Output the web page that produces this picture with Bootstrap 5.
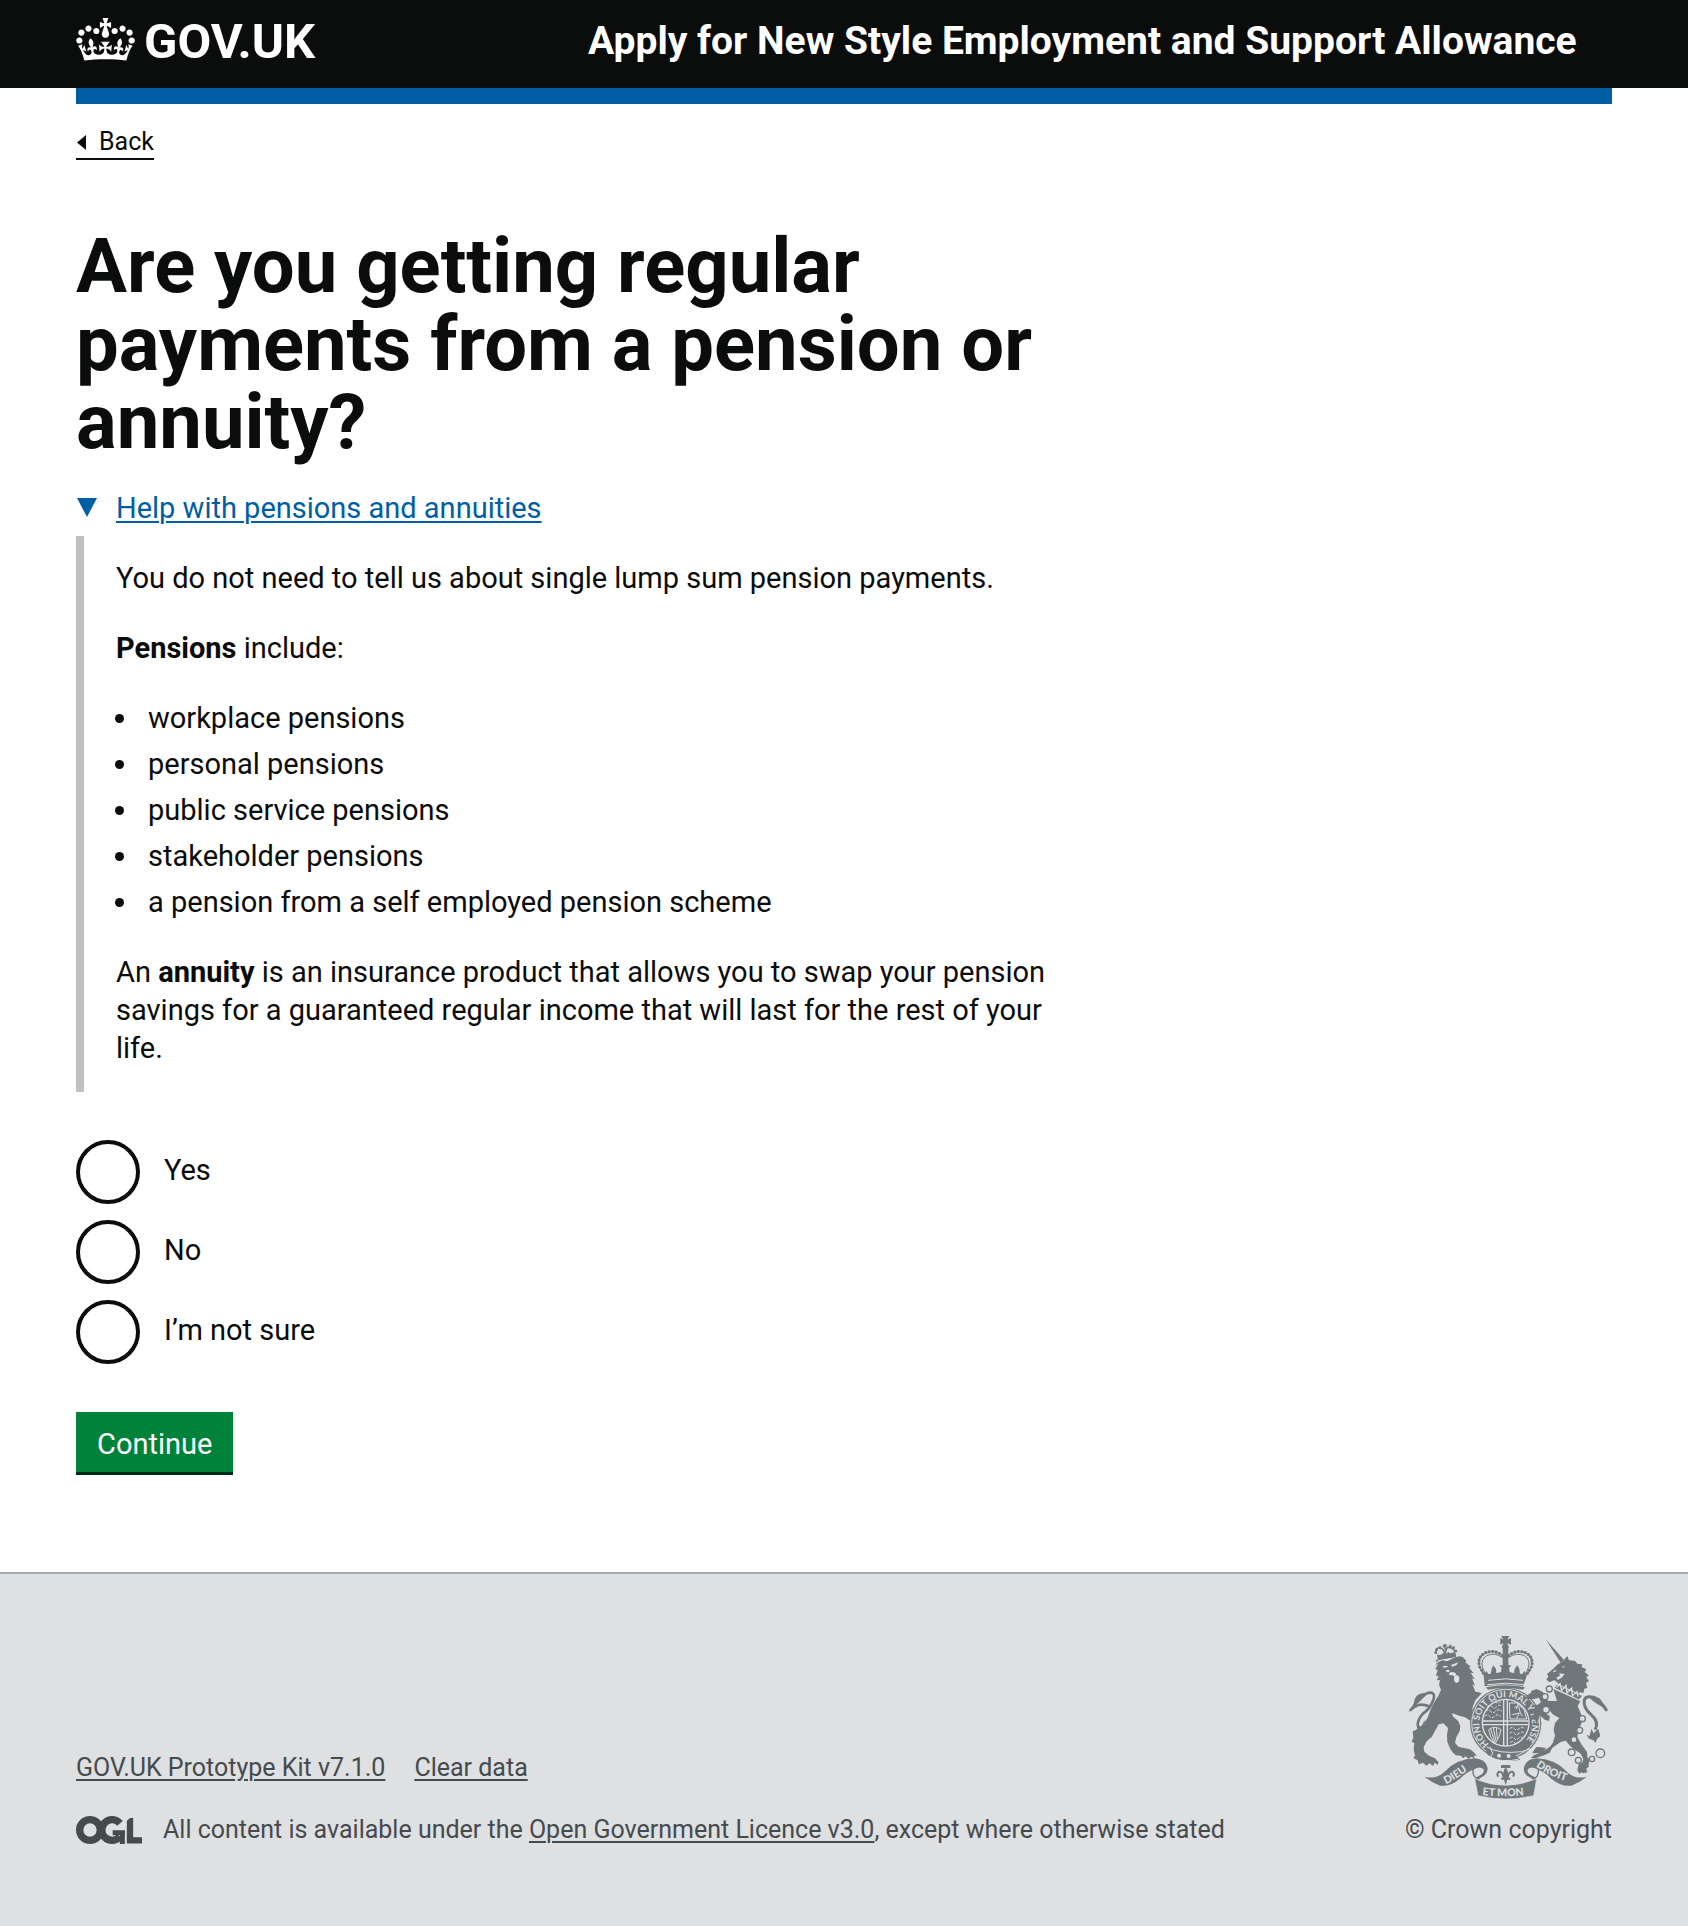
<!DOCTYPE html>
<html lang="en">
<head>
<meta charset="utf-8">
<meta name="viewport" content="width=device-width, initial-scale=1">
<title>Are you getting regular payments from a pension or annuity?</title>
<link rel="stylesheet" href="https://cdn.jsdelivr.net/npm/bootstrap@5.3.0/dist/css/bootstrap.min.css">
<script src="https://cdn.jsdelivr.net/npm/bootstrap@5.3.0/dist/js/bootstrap.bundle.min.js"></script>
<style>
  body { font-family: Roboto, "Liberation Sans", Arial, sans-serif; font-size: 29px; line-height: 38px; color: #0b0c0c; background: #fff; }
  .page-width { width: 91%; max-width: 1536px; margin: 0 auto; }
  .site-header { background: #0b0c0c; color: #fff; padding: 18px 0 22px; }
  .site-header a { color: #fff; text-decoration: none; font-weight: 700; }
  .logotype { font-size: 49px; line-height: 48px; gap: 9px; }
  .service-name { font-size: 39px; line-height: 46px; display: block; }
  .blue-bar { height: 16px; background: #005ea5; }
  .back-link { font-size: 25px; line-height: 32px; color: #0b0c0c; text-decoration: none; border-bottom: 2px solid #0b0c0c; margin-top: 22px; gap: 13px; }
  .two-thirds { max-width: 1008px; }
  h1 { font-size: 76px; line-height: 78px; font-weight: 700; margin: 67px 0 28px; }
  summary { list-style: none; color: #005ea5; gap: 19px; }
  summary::-webkit-details-marker { display: none; }
  summary span, .site-footer a { text-decoration: underline; text-decoration-thickness: 2px; text-underline-offset: 3px; }
  .help-text { border-left: 8px solid #bfc1c3; margin-top: 9px; padding: 23px 24px 25px 32px; }
  .help-text p, .help-text ul { margin-bottom: 32px; }
  .help-text p:last-child { margin-bottom: 0; }
  .help-text ul { padding-left: 24px; }
  .help-text li { padding-left: 8px; }
  .help-text li + li { margin-top: 8px; }
  .choices { margin: 48px 0; gap: 16px; }
  .choices input { appearance: none; width: 64px; height: 64px; border: 4px solid #0b0c0c; border-radius: 50%; margin: 0; background: #fff; }
  .choices input:checked { box-shadow: inset 0 0 0 12px #fff; background: #0b0c0c; }
  .choices label { padding: 11px 24px; }
  .btn-continue { font-size: 29px; line-height: 38px; padding: 13px 21px 9px; border: 0; border-radius: 0; color: #fff; background: #00823b; box-shadow: 0 3px 0 #002d18; }
  .btn-continue:hover { background: #00692f; color: #fff; }
  .site-footer { margin-top: 100px; border-top: 2px solid #a1acb2; background: #dee0e2; color: #454a4d; font-size: 25px; line-height: 32px; padding: 62px 0 80px; }
  .site-footer a { color: #454a4d; }
  .meta-links { gap: 29px; margin-bottom: 30px; }
  .licence { gap: 21px; }
  .arms { display: block; margin: 0 4px 15px auto; }
</style>
</head>
<body>
<header>
  <div class="site-header">
    <div class="page-width">
      <div class="row g-0">
        <div class="col-4 d-flex">
          <a href="#" class="logotype d-flex align-items-start">
            <svg width="59" height="43" viewBox="0 0 132 97" fill="#fff" aria-hidden="true"><path d="M25 30.2c3.5 1.5 7.7-.2 9.1-3.7 1.5-3.6-.2-7.8-3.9-9.2-3.6-1.4-7.6.3-9.1 3.9-1.4 3.5.3 7.5 3.9 9zM9 39.5c3.6 1.5 7.8-.2 9.2-3.7 1.5-3.6-.2-7.8-3.9-9.1-3.6-1.5-7.6.2-9.1 3.8-1.4 3.5.3 7.5 3.8 9zM4.4 57.2c3.5 1.5 7.7-.2 9.1-3.8 1.5-3.6-.2-7.7-3.9-9.1-3.5-1.5-7.6.3-9.1 3.8-1.4 3.5.3 7.6 3.9 9.1zm38.3-21.4c3.5 1.5 7.7-.2 9.1-3.8 1.5-3.6-.2-7.7-3.9-9.1-3.6-1.5-7.6.3-9.1 3.8-1.3 3.6.4 7.7 3.9 9.1zm64.4-5.6c-3.6 1.5-7.8-.2-9.1-3.7-1.5-3.6.2-7.8 3.8-9.2 3.6-1.4 7.7.3 9.2 3.9 1.3 3.5-.4 7.5-3.9 9zm15.9 9.3c-3.6 1.5-7.7-.2-9.1-3.7-1.5-3.6.2-7.8 3.7-9.1 3.6-1.5 7.7.2 9.2 3.8 1.5 3.5-.3 7.5-3.8 9zm4.7 17.7c-3.6 1.5-7.8-.2-9.2-3.8-1.5-3.6.2-7.7 3.9-9.1 3.6-1.5 7.7.3 9.2 3.8 1.3 3.5-.4 7.6-3.9 9.1zM89.3 35.8c-3.6 1.5-7.8-.2-9.2-3.8-1.4-3.6.2-7.7 3.9-9.1 3.6-1.5 7.7.3 9.2 3.8 1.4 3.6-.3 7.7-3.9 9.1zM69.7 17.7l8.9 4.7V9.3l-8.9 2.8c-.2-.3-.5-.6-.9-.9L72.4 0H59.6l3.5 11.2c-.3.3-.6.5-.9.9l-8.8-2.8v13.1l8.8-4.7c.3.3.6.7.9.9l-5 15.4v.1c-.2.8-.4 1.6-.4 2.4 0 4.1 3.1 7.5 7 8.1h.2c.3 0 .7.1 1 .1.4 0 .7 0 1-.1h.2c4-.6 7.1-4.1 7.1-8.1 0-.8-.1-1.7-.4-2.4V34l-5.1-15.4c.4-.2.7-.6 1-.9zM66 92.8c16.9 0 32.8 1.1 47.1 3.2 4-16.9 8.9-26.7 14-33.5l-9.6-3.4c1 4.9 1.1 7.2 0 10.2-1.5-1.4-3-4.3-4.2-8.7L108.6 76c2.8-2 5-3.2 7.5-3.3-4.4 9.4-10 11.9-13.6 11.2-4.3-.8-6.3-4.6-5.6-7.9 1-4.7 5.7-5.9 8-.5 4.3-8.7-3-11.4-7.6-8.8 7.1-7.2 7.9-13.5 2.1-21.1-8 6.1-8.1 12.3-4.5 20.8-4.7-5.4-12.1-2.5-9.5 6.2 3.4-5.2 7.9-2 7.2 3.1-.6 4.3-6.4 7.8-13.5 7.2-10.3-.9-10.9-8-11.2-13.8 2.5-.5 7.1 1.8 11 7.3L80.2 60c-4.1 4.4-8 5.3-12.3 5.4 1.4-4.4 8-11.6 8-11.6H55.5s6.4 7.2 7.9 11.6c-4.2-.1-8-1-12.3-5.4l1.4 16.4c3.9-5.5 8.5-7.7 10.9-7.3-.3 5.8-.9 12.8-11.1 13.8-7.2.6-12.9-2.9-13.5-7.2-.7-5 3.8-8.3 7.1-3.1 2.7-8.7-4.6-11.6-9.4-6.2 3.7-8.5 3.6-14.7-4.6-20.8-5.8 7.6-5 13.9 2.2 21.1-4.7-2.6-11.9.1-7.7 8.8 2.3-5.5 7.1-4.2 8.1.5.7 3.3-1.3 7.1-5.7 7.9-3.5.7-9-1.8-13.5-11.2 2.5.1 4.7 1.3 7.5 3.3l-4.7-15.4c-1.2 4.4-2.7 7.2-4.3 8.7-1.1-3-.9-5.3 0-10.2l-9.5 3.4c5 6.9 9.9 16.7 14 33.5 14.8-2.1 30.8-3.2 47.7-3.2z"/></svg>
            <span>GOV.UK</span>
          </a>
        </div>
        <div class="col-8">
          <a href="#" class="service-name">Apply for New Style Employment and Support Allowance</a>
        </div>
      </div>
    </div>
  </div>
  <div class="page-width"><div class="blue-bar"></div></div>
</header>

<div class="page-width">
  <a href="#" class="back-link d-inline-flex align-items-center"><svg width="10" height="15" viewBox="0 0 10 15" aria-hidden="true"><path d="M10 0v15L1 7.500z" fill="#0b0c0c"/></svg>Back</a>
  <main class="two-thirds">
    <h1>Are you getting regular payments from a pension or annuity?</h1>
    <details open>
      <summary class="d-flex align-items-center"><svg width="21" height="20" viewBox="0 0 21 20" aria-hidden="true"><path d="M1 0h20L11 19z" fill="#005ea5"/></svg><span>Help with pensions and annuities</span></summary>
      <div class="help-text">
        <p>You do not need to tell us about single lump sum pension payments.</p>
        <p><strong>Pensions</strong> include:</p>
        <ul>
          <li>workplace pensions</li>
          <li>personal pensions</li>
          <li>public service pensions</li>
          <li>stakeholder pensions</li>
          <li>a pension from a self employed pension scheme</li>
        </ul>
        <p>An <strong>annuity</strong> is an insurance product that allows you to swap your pension savings for a guaranteed regular income that will last for the rest of your life.</p>
      </div>
    </details>
    <form>
      <div class="choices d-flex flex-column">
        <div class="d-flex align-items-start"><input type="radio" name="pension" id="pension-yes"><label for="pension-yes">Yes</label></div>
        <div class="d-flex align-items-start"><input type="radio" name="pension" id="pension-no"><label for="pension-no">No</label></div>
        <div class="d-flex align-items-start"><input type="radio" name="pension" id="pension-unsure"><label for="pension-unsure">I’m not sure</label></div>
      </div>
      <button type="button" class="btn btn-continue d-block">Continue</button>
    </form>
  </main>
</div>

<footer class="site-footer">
  <div class="page-width d-flex justify-content-between align-items-end">
    <div>
      <div class="meta-links d-flex"><a href="#">GOV.UK Prototype Kit v7.1.0</a><a href="#">Clear data</a></div>
      <div class="licence d-flex align-items-center">
        <svg width="66" height="28" viewBox="18 30 198 84" role="img" aria-label="OGL" fill="none" stroke="#454a4d">
          <circle cx="60" cy="72" r="31" stroke-width="22"/>
          <path d="M150 52A31 31 0 1 0 150 92" stroke-width="22"/>
          <path d="M128 80H165M157 76V114" stroke-width="15"/>
          <path d="M180 36V103H216" stroke-width="19"/>
          <path d="M166 48L190 28H166z" fill="#dee0e2" stroke="none"/>
        </svg>
        <span>All content is available under the <a href="#">Open Government Licence v3.0</a>, except where otherwise stated</span>
      </div>
    </div>
    <div class="text-end">
      <svg class="arms" width="200" height="163" viewBox="54 48 600 489" role="img" aria-label="Royal coat of arms" fill="#6f777b" font-family="Lato, Roboto, sans-serif" font-weight="700">
        <!-- lion: crown -->
        <g fill="none" stroke="#6f777b" stroke-width="5">
          <path d="M139 101q-4-19 12-17 10 3 15 18 1-17 8-20 15-1 22 14"/>
          <path d="M143 117l55-9M142 108l54-9M163 72l4 18M158 79l13-3"/>
        </g>
        <g><circle cx="137" cy="98" r="4"/><circle cx="140" cy="89" r="4"/><circle cx="150" cy="83" r="4"/><circle cx="181" cy="78" r="4"/><circle cx="191" cy="83" r="4"/><circle cx="198" cy="93" r="4"/><path d="M142 103l12 5 6-11 6 9 9-11 6 9 14-9 4 15-55 11z"/></g>
        <!-- lion: body -->
        <path d="M134 140l11-14 12-5 15 3 20-11 15-4 10 1 12 12-3 5 17 14-7 1 15 18-9-2 12 20-8-3 9 22-8-4 9 22 10 2 9 3-19 21-8 20-1 25 4 21-12-6-14-9-17-5-23-8 5 11 15 14 6 14-2 16-10 18-4 16 10 12 16 4 19 4 13 10 7 10-8-1 2 9-10-6-9 7-7-8-9 6-6-8-15-1-9-8-8-11-9-21-1-20 3-22-14-14-14 3-9 16-12 22-15 13-9 18 2 13 14 12 18 8 10 11-1 9-10-7-5 10-10-8-10 7-10-9-13 5-3-12-13-7 5-7-4-19 2-18-8-5 5-12-2-19 8-3 22-17 14-19 10-27 11-21 13-21 7-17-6-15 3-14-10 1 6-11-8-4 5-15-7-4 7-13-6-14 8-1z"/>
        <g fill="#dee0e2"><path d="M158 137l16 1-3 4-10 1zM183 135l22-8-6 9-13 4zM177 160q12-9 22 2l-4 9-7-5-10-1z"/><ellipse cx="200" cy="177" rx="8" ry="11"/><path d="M167 151l10-2 1 7-7 1z"/></g>
        <!-- lion: tail -->
        <path d="M54 278l17-27q3-31 32-32l9 1-3 5q-12 12-35 34z"/>
        <path d="M60 272q24-29 59-12M107 221q32-11 23 19-8 24-34 44-21 25-7 46" fill="none" stroke="#6f777b" stroke-width="8"/>
        <path d="M80 316l15 5 8-21 3 25 16-6-10 16-6 6 10 5-17 9-14-5 7-5-14-10 10-3z"/>
        <!-- central crown -->
        <path d="M334 48h24l-6 11 11-5v20l-11-5 5 14h-22l5-14-9 5V54l9 5z"/>
        <path d="M338 81h17v58h-17z"/>
        <g fill="none" stroke="#6f777b" stroke-width="9" stroke-dasharray="1 9.500" stroke-linecap="round"><path d="M337 107q-24-20-52-8-25 14-16 42l13 22M356 107q24-20 52-8 25 14 16 42l-13 22"/></g>
        <g fill="none" stroke="#6f777b" stroke-width="3"><path d="M338 113q-24-17-48-6-20 13-12 36l10 24M355 113q24-17 48-6 20 13 12 36l-10 24"/></g>
        <path d="M281 165l8-12 6 9 7-1 3-15 5-10 8 10 1 14 14-4 2-13-7-7h36l-7 8 2 12 13 4 2-14 8-10 6 10 2 15 7 1 6-9 8 12-12 34q-54-11-115 0z"/>
        <path d="M294 181q54-9 105 0M292 194q54-9 109 0" fill="none" stroke="#dee0e2" stroke-width="3"/>
        <path d="M288 202q58-13 117 0l-6 7q-54-10-105 0z"/>
        <!-- garter and shield -->
        <circle cx="347" cy="310" r="107"/>
        <g fill="none" stroke="#dee0e2" stroke-width="3"><circle cx="347" cy="310" r="102"/><circle cx="347" cy="308" r="70" stroke-width="4"/></g>
        <path id="garter-motto" d="M297 372A79 79 0 1 1 397 372" fill="none"/>
        <text fill="#dee0e2" font-size="27"><textPath href="#garter-motto">HONI SOIT QUI MAL Y PENSE</textPath></text>
        <g fill="none" stroke="#dee0e2" stroke-width="3">
          <path d="M341 240V376M352 240V376M279 303H415M279 314H415" stroke-width="4"/>
          <path d="M291 260q9-9 15 0t14 0 15 0M287 274q9-9 15 0t14 0 20 0M284 289q9-9 15 0t14 0 20 0M302 246q9-6 13 0t17 0" stroke-dasharray="9 4"/>
          <path d="M358 249h22l22 19 8 29h-50zM373 263q13-10 15 4t9 22M367 284l21-5-8 16M386 248l-7 20"/>
          <path d="M359 326q10-8 14 0t14 0 16 0M359 340q10-8 14 0t14 0 16 0M359 355q10-8 14 0t12 0 13 0M360 368q10-8 14 0t8 0" stroke-dasharray="9 4"/>
          <path d="M296 329q18-14 37 0-4 25-18 42-15-17-19-42M302 326l12 39M310 323l8 40M319 323l3 34"/>
        </g>
        <path d="M284 381q31 23 91 23l16 15q-60 12-98-15z"/>
        <path d="M290 381q38 22 105 14l33-10M295 411q40 18 90 7M300 380l8 20-8 14" fill="none" stroke="#dee0e2" stroke-width="3"/>
        <g fill="#dee0e2"><circle cx="327" cy="407" r="6"/><circle cx="356" cy="408" r="6"/></g>
        <!-- unicorn -->
        <path d="M467 58l55 62-10 8z"/>
        <path d="M502 134l18-12 12-14 5 13 18 1 7 9 15 2-2 8 14 7-5 8 12 10-7 6 8 12-9 4 4 16-9 2-3 14-9-4-6 7-17-2-38-15-4-15-13-11-14 7-10-8 6-10-4-7 18-15z"/>
        <path d="M490 153l9-3-2 5-7 2zM506 160l18 2-9 11-12 7-4-7 12-7zM516 140l8-2-2 5z" fill="#dee0e2"/>
        <path d="M501 193l77 34-11 13-75-36z" stroke="#dee0e2" stroke-width="3"/>
        <path d="M500 203l10-12 5 20 13-15 3 23 14-15 2 23 14-12 3 15" stroke="#dee0e2" stroke-width="4" fill="none"/>
        <path d="M490 207l81 37-8 14 11 26 3 18-12 31-3 18 12 22 17 23 2 22-7 19 6 20-13 3-13-11 12-11 2-21-8-16-29-21-16-18-15 4-25 17-8 15-15 7-26 9-16 0 11-9 20-8 25-15 10-12 7-23-4-17 4-21 13-15-18-10-15-17-19 5-10 18-4 18-12-12-10-3 10-9 7-25 16-12-6-14-15 4-18 0-6-9 15-10 16-4 18 8 18 21 26 0z"/>
        <path d="M423 213l17-6 17 8 17 17-13 10-16-15-18 0zM430 255l21-1 8 20 20 14-1 15-14-4-15-14z"/>
        <path d="M426 400l13-19 15 1 14 2-12 15z"/>
        <!-- unicorn: tail -->
        <path d="M654 276l-17-27q-3-18-30-20l-9 1q5 12 38 30z"/>
        <path d="M650 272q-12-22-34-38-28-9-33 6-4 23 20 44 26 22 12 45" fill="none" stroke="#6f777b" stroke-width="9"/>
        <path d="M590 344l9 4 5-22 7 14 14-14 6 23-8 6-7 13-6-7-13-5z"/>
        <!-- chain -->
        <g fill="none" stroke="#6f777b" stroke-width="4"><circle cx="631" cy="400" r="13"/><circle cx="606" cy="417" r="8"/><circle cx="565" cy="421" r="9"/><circle cx="545" cy="397" r="10"/><circle cx="478" cy="207" r="9"/></g>
        <g fill="#dee0e2" stroke="#6f777b" stroke-width="4"><circle cx="465" cy="230" r="9"/><circle cx="468" cy="269" r="10"/><circle cx="577" cy="296" r="9"/><circle cx="569" cy="331" r="9"/><circle cx="552" cy="359" r="9"/><circle cx="587" cy="425" r="7"/></g>
        <path d="M566 432l12-5 6-17 13 6-1 24-16 14-12 7-6-10z"/>
        <!-- motto scroll -->
        <g id="scroll-end">
          <path d="M104 470Q140 480 166 453Q200 417 255 415Q287 417 293 445Q293 464 274 472L262 482Q244 464 252 449Q232 453 210 476Q182 500 150 497Q124 488 104 470z"/>
          <path d="M250 447Q272 434 283 448Q286 462 268 469L258 474Q246 464 250 447z" fill="#dee0e2" stroke="#6f777b" stroke-width="4"/>
        </g>
        <use href="#scroll-end" transform="translate(694 0) scale(-1 1)"/>
        <path d="M254 476Q346 516 440 476L431 527Q346 547 264 527z" stroke="#dee0e2" stroke-width="2"/>
        <path id="scroll-left" d="M168 492Q200 478 252 437" fill="none"/>
        <path id="scroll-mid" d="M277 525Q346 534 425 523" fill="none"/>
        <path id="scroll-right" d="M438 439Q478 470 548 490" fill="none"/>
        <g fill="#dee0e2" font-size="32" font-weight="900"><text><textPath href="#scroll-left">DIEU</textPath></text><text><textPath href="#scroll-mid">ET MON</textPath></text><text><textPath href="#scroll-right">DROIT</textPath></text></g>
        <!-- fleur-de-lis -->
        <path d="M333 435h28v9h-28zM347 442q12 14 5 32h-10q-7-18 5-32zM333 473h28v6h-28zM342 479h10l-5 17z"/>
        <path d="M341 475q-2-21-13-20-10 6-3 15M353 475q2-21 13-20 10 6 3 15" fill="none" stroke="#6f777b" stroke-width="6"/>
      </svg>
      <div>© Crown copyright</div>
    </div>
  </div>
</footer>
</body>
</html>
